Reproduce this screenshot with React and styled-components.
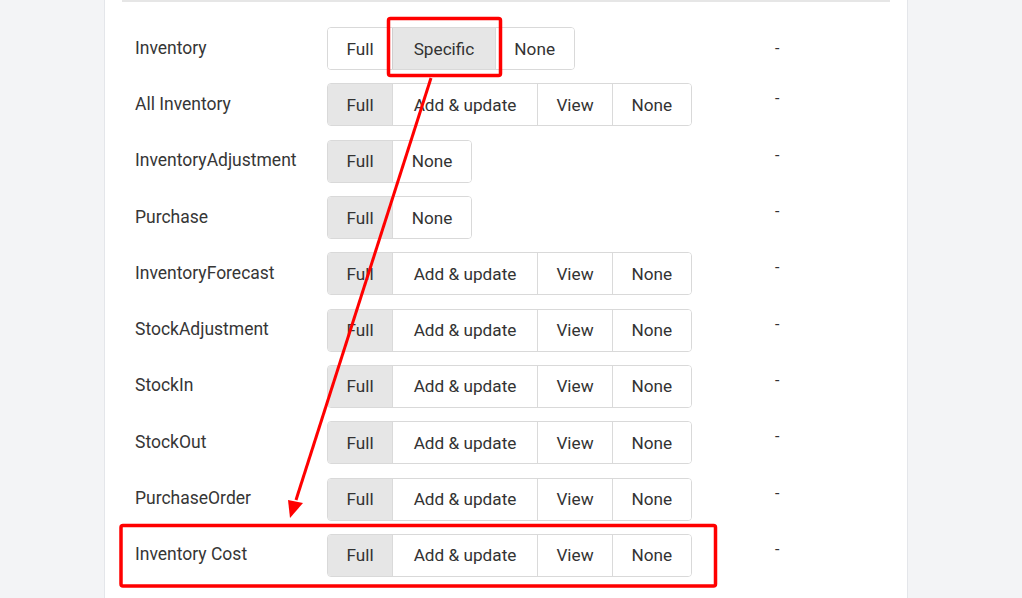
import React from 'react';
import styled, { createGlobalStyle } from 'styled-components';

const GlobalStyle = createGlobalStyle`
  html, body {
    margin: 0;
    padding: 0;
    background: #f3f4f6;
    font-family: Roboto, "Noto Sans", Arial, sans-serif;
    overflow: hidden;
  }
`;

const Page = styled.div`
  position: relative;
  width: 1022px;
  height: 598px;
  overflow: hidden;
`;

const Panel = styled.section`
  margin-left: 104px;
  width: 768px;
  height: 598px;
  background: #fff;
  border-left: 1px solid #e4e6ea;
  border-right: 1px solid #e4e6ea;
  padding: 0 17px 0 17px;
  box-sizing: content-box;
`;

const Divider = styled.div`
  height: 2px;
  background: #e6e6e6;
`;

const Rows = styled.div`
  padding-top: 18.5px;
  padding-left: 13px;
`;

const Row = styled.div`
  display: grid;
  grid-template-columns: 192px 448px 40px;
  align-items: center;
  height: 56.3px;
`;

const Label = styled.div`
  font-size: 17.5px;
  color: #363636;
  margin-top: -2px;
`;

const Group = styled.div`
  display: inline-flex;
  justify-self: start;
  height: 41px;
  border: 1px solid #d9d9d9;
  border-radius: 4px;
  overflow: hidden;
  background: #fff;
`;

const Option = styled.div`
  display: flex;
  align-items: center;
  justify-content: center;
  padding: 0 ${p => (p.$long ? '20.5px' : '18.5px')};
  font-size: 17.2px;
  color: #333;
  background: ${p => (p.$active ? '#e6e6e6' : '#fff')};
  border-left: 1px solid ${p => (p.$active ? '#cfcfcf' : '#dadada')};
  &:first-child {
    border-left: none;
  }
`;

const Dash = styled.div`
  font-size: 16px;
  color: #333;
  margin-top: ${p => (p.$lift ? '-12px' : '0')};
`;

const Overlay = styled.svg`
  position: absolute;
  left: 0;
  top: 0;
  pointer-events: none;
`;

const FULL = ['Full', 'Add & update', 'View', 'None'];

const rows = [
  { name: 'Inventory', options: ['Full', 'Specific', 'None'], active: 'Specific' },
  { name: 'All Inventory', options: FULL, active: 'Full' },
  { name: 'InventoryAdjustment', options: ['Full', 'None'], active: 'Full' },
  { name: 'Purchase', options: ['Full', 'None'], active: 'Full' },
  { name: 'InventoryForecast', options: FULL, active: 'Full' },
  { name: 'StockAdjustment', options: FULL, active: 'Full' },
  { name: 'StockIn', options: FULL, active: 'Full' },
  { name: 'StockOut', options: FULL, active: 'Full' },
  { name: 'PurchaseOrder', options: FULL, active: 'Full' },
  { name: 'Inventory Cost', options: FULL, active: 'Full' },
];

function Annotations() {
  return (
    <Overlay width="1022" height="598" viewBox="0 0 1022 598">
      <rect x="388.5" y="18.5" width="112" height="57" rx="2" fill="none" stroke="#ff0000" strokeWidth="3.5" />
      <rect x="121" y="525.5" width="594.5" height="60.5" rx="2" fill="none" stroke="#ff0000" strokeWidth="3.5" />
      <line x1="431" y1="78" x2="296" y2="500" stroke="#ff0000" strokeWidth="3" />
      <polygon points="288,500 303,503 290,518" fill="#ff0000" />
    </Overlay>
  );
}

export default function App() {
  return (
    <Page>
      <GlobalStyle />
      <Panel>
        <Divider />
        <Rows>
          {rows.map((r, i) => (
            <Row key={r.name}>
              <Label>{r.name}</Label>
              <Group>
                {r.options.map(o => (
                  <Option key={o} $active={o === r.active} $long={o.length >= 8}>{o}</Option>
                ))}
              </Group>
              <Dash $lift={i > 0}>-</Dash>
            </Row>
          ))}
        </Rows>
      </Panel>
      <Annotations />
    </Page>
  );
}
